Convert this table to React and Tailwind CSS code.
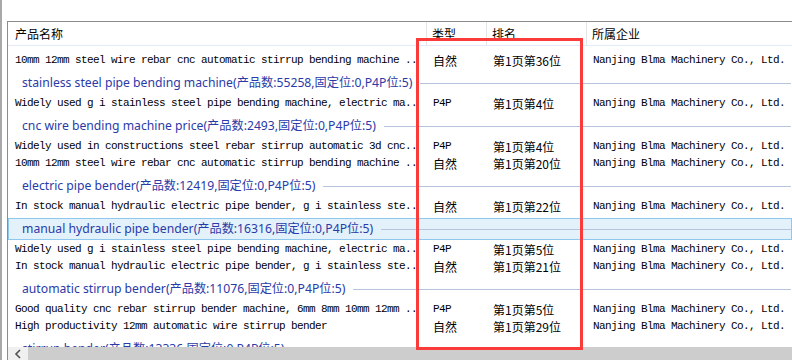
import React from 'react';

const mono = "font-['Liberation_Mono','Noto_Sans_CJK_SC',monospace] text-[11px] tracking-[-0.6px] text-black";
const cjk = "font-['Noto_Sans_CJK_SC',sans-serif] text-[12px] text-black";

const items = [
  { row: '10mm 12mm steel wire rebar cnc automatic stirrup bending machine ..', kind: '自然', rank: '第1页第36位' },
  { group: 'stainless steel pipe bending machine(产品数:55258,固定位:0,P4P位:5)' },
  { row: 'Widely used g i stainless steel pipe bending machine, electric ma..', kind: 'P4P', rank: '第1页第4位' },
  { group: 'cnc wire bending machine price(产品数:2493,固定位:0,P4P位:5)' },
  { row: 'Widely used in constructions steel rebar stirrup automatic 3d cnc..', kind: 'P4P', rank: '第1页第4位' },
  { row: '10mm 12mm steel wire rebar cnc automatic stirrup bending machine ..', kind: '自然', rank: '第1页第20位' },
  { group: 'electric pipe bender(产品数:12419,固定位:0,P4P位:5)' },
  { row: 'In stock manual hydraulic electric pipe bender, g i stainless ste..', kind: '自然', rank: '第1页第22位' },
  { group: 'manual hydraulic pipe bender(产品数:16316,固定位:0,P4P位:5)', selected: true },
  { row: 'Widely used g i stainless steel pipe bending machine, electric ma..', kind: 'P4P', rank: '第1页第5位' },
  { row: 'In stock manual hydraulic electric pipe bender, g i stainless ste..', kind: '自然', rank: '第1页第21位' },
  { group: 'automatic stirrup bender(产品数:11076,固定位:0,P4P位:5)' },
  { row: 'Good quality cnc rebar stirrup bender machine, 6mm 8mm 10mm 12mm ..', kind: 'P4P', rank: '第1页第5位' },
  { row: 'High productivity 12mm automatic wire stirrup bender', kind: '自然', rank: '第1页第29位' },
  { group: 'stirrup bender(产品数:13336,固定位:0,P4P位:5)' },
];

const GroupHeader = ({ text, selected }) => (
  <div className="h-[26px] pt-[3px]">
    <div
      className={`h-[22px] flex items-center ${selected ? 'bg-[#e3f1fb] border border-[#8fc8ef]' : 'border border-transparent'}`}
    >
      <span className="ml-[13px] whitespace-nowrap font-['Noto_Sans','Noto_Sans_CJK_SC',sans-serif] text-[12.2px] text-[#2a3aa8]">
        {text}
      </span>
      <div className="ml-[8px] flex-1 h-px bg-[#b6c4de]" />
    </div>
  </div>
);

const Row = ({ name, kind, rank }) => (
  <div className="h-[17px] flex leading-[17px]">
    <div className={`w-[419px] pl-[7px] overflow-hidden whitespace-nowrap ${mono}`}>{name}</div>
    <div className={`w-[60px] pl-[6px] whitespace-nowrap ${kind === 'P4P' ? mono : cjk}`}>{kind}</div>
    <div className={`w-[100px] pl-[6px] whitespace-nowrap ${cjk}`}>{rank}</div>
    <div className={`flex-1 pl-[6px] whitespace-nowrap ${mono}`}>Nanjing Blma Machinery Co., Ltd.</div>
  </div>
);

export default function App() {
  return (
    <div className="relative w-[792px] h-[360px] overflow-hidden bg-white border-l-2 border-[#a8a8a8]">
      <div className="ml-[5px] mt-[21px] h-[339px] flex flex-col border-l border-t border-[#8c8c8c]">
        {/* header */}
        <div className="h-[24px] shrink-0 flex border-b border-[#e2ebf5] font-['Noto_Sans_CJK_SC',sans-serif] text-[12px] text-black">
          <div className="w-[419px] pl-[7px] flex items-center border-r border-[#e5e5e5]">产品名称</div>
          <div className="w-[60px] pl-[5px] flex items-center border-r border-[#e5e5e5]">类型</div>
          <div className="w-[100px] pl-[5px] flex items-center border-r border-[#e5e5e5]">排名</div>
          <div className="flex-1 pl-[5px] flex items-center">所属企业</div>
        </div>

        {/* body */}
        <div className="h-[301px] shrink-0 overflow-hidden pt-[6px]">
          {items.map((it, i) =>
            it.group ? (
              <GroupHeader key={i} text={it.group} selected={it.selected} />
            ) : (
              <Row key={i} name={it.row} kind={it.kind} rank={it.rank} />
            )
          )}
        </div>

        {/* horizontal scrollbar */}
        <div className="h-[17px] shrink-0 flex bg-[#cdcdcd]">
          <div className="w-[20px] bg-[#f0f0f0] flex items-start justify-center pt-[2px]">
            <svg width="8" height="10" viewBox="0 0 8 10">
              <path d="M6 1 L2 5 L6 9" fill="none" stroke="#505050" strokeWidth="1.6" />
            </svg>
          </div>
        </div>
      </div>

      {/* red highlight */}
      <div className="absolute left-[414px] top-[38px] w-[167px] h-[312px] border-[3px] border-[#fb3a3a]" />
    </div>
  );
}
